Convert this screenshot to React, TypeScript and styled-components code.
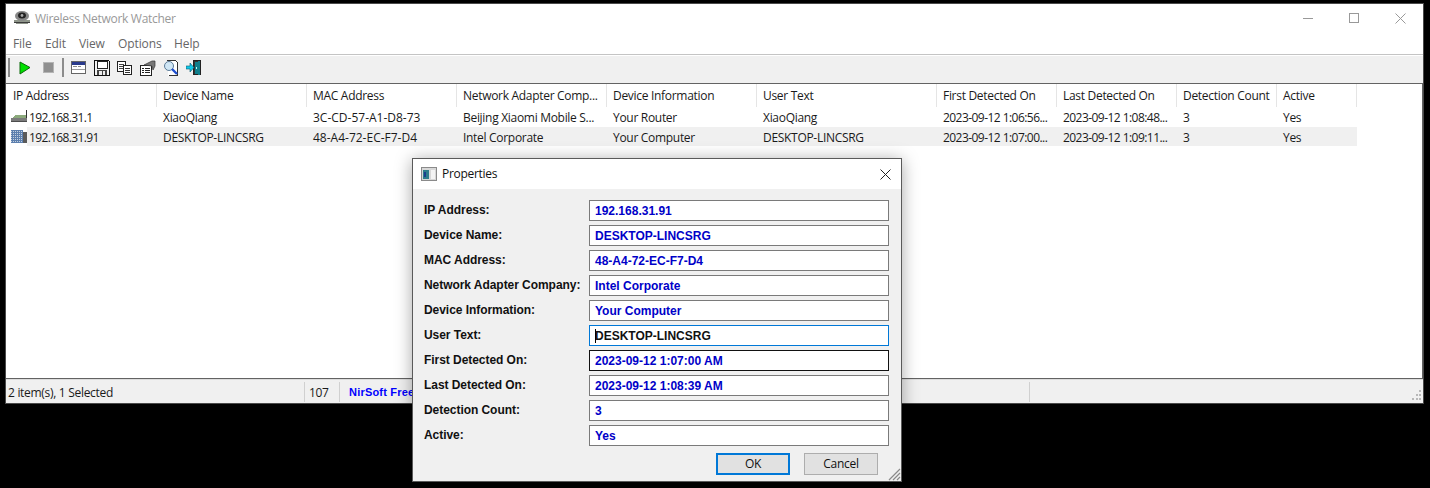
import React from "react";
import styled, { createGlobalStyle } from "styled-components";

const Global = createGlobalStyle`
  html, body { margin: 0; padding: 0; background: #000; }
  body { width: 1430px; height: 488px; overflow: hidden; font-family: "Open Sans", "Noto Sans", sans-serif; letter-spacing: -0.3px; }
  * { box-sizing: border-box; }
`;

const Desktop = styled.div`
  position: relative;
  width: 1430px;
  height: 488px;
  background: #000;
  padding: 3px 6px 0 5px;
`;
const Win = styled.div`
  width: 1419px;
  height: 401px;
  border: 1px solid #4a4a4a;
  background: #fff;
  display: flex;
  flex-direction: column;
`;
const TitleBar = styled.div`
  height: 27px;
  display: flex;
  align-items: center;
  padding-left: 7px;
  gap: 4px;
  color: #999;
  font-size: 12px;
  flex: none;
`;
const TitleText = styled.span`flex: 1; padding-top: 1px;`;
const WinButtons = styled.div`display: flex; height: 27px;`;
const WinButton = styled.div`
  width: 46px;
  display: flex;
  align-items: center;
  justify-content: center;
  margin-top: 1px;
`;
const MenuBar = styled.div`
  display: flex;
  align-items: center;
  padding: 2px 0 0 7px;
  border-bottom: 1px solid #c4c4c4;
  height: 24px;
  flex: none;
`;
const MenuItem = styled.span<{ $w: number }>`
  width: ${(p) => p.$w}px;
  font-size: 12px;
  color: #666;
  letter-spacing: -0.1px;
`;
const Toolbar = styled.div`
  height: 29px;
  flex: none;
  background: #f0f0f0;
  border-top: 1px solid #fff;
  border-bottom: 1px solid #636363;
  display: flex;
  align-items: center;
  padding: 0 0 4px 2px;
`;
const ToolSep = styled.div<{ $gap: number }>`
  width: 2px;
  height: 19px;
  background: #8c8c8c;
  margin-right: ${(p) => p.$gap}px;
  flex: none;
`;
const ToolBtn = styled.div<{ $w?: number }>`
  width: ${(p) => p.$w ?? 23}px;
  height: 20px;
  display: flex;
  align-items: center;
  justify-content: center;
  flex: none;
`;
const List = styled.div`
  flex: 1;
  min-height: 0;
  background: #fff;
  border-bottom: 1px solid #636363;
  padding-left: 1px;
  border-right: 1px solid #636363;
`;
const Grid = styled.div`
  display: grid;
  grid-template-columns: 150px 150px 150px 150px 150px 180px 120px 120px 100px 80px;
  width: 1350px;
`;
const HeadCell = styled.div`
  height: 23px;
  padding: 0 0 0 6px;
  display: flex;
  align-items: center;
  font-size: 12px;
  color: #1a1a1a;
  border-right: 1px solid #e5e5e5;
  white-space: nowrap;
  overflow: hidden;
`;
const Cell = styled.div<{ $sel?: boolean; $track: number }>`
  height: ${(p) => (p.$sel ? 19 : 20)}px;
  padding-left: 6px;
  padding-top: ${(p) => (p.$sel ? 1 : 0)}px;
  display: flex;
  align-items: center;
  font-size: 12px;
  letter-spacing: ${(p) => p.$track}px;
  color: #1a1a1a;
  white-space: nowrap;
  overflow: hidden;
  background: ${(p) => (p.$sel ? "#f0f0f0" : "transparent")};
`;
const FirstCell = styled(Cell)`
  background: ${(p) => (p.$sel ? "linear-gradient(to right, #fff 20px, #f0f0f0 20px)" : "transparent")};
  padding-left: 4px;
`;
const StatusBar = styled.div`
  height: 24px;
  flex: none;
  background: #f0f0f0;
  border-top: 1px solid #dcdcdc;
  display: flex;
  align-items: center;
  position: relative;
  font-size: 12px;
  color: #1a1a1a;
`;
const StatusPart = styled.div<{ $w?: number; $pad?: number; $link?: boolean }>`
  ${(p) => (p.$w ? `width: ${p.$w}px; flex: none;` : "flex: 1;")}
  height: 20px;
  display: flex;
  align-items: center;
  padding-left: ${(p) => p.$pad ?? 2}px;
  padding-top: 2px;
  white-space: nowrap;
  overflow: hidden;
  border-right: 1px solid #d0d0d0;
  &:last-of-type { border-right: 0; }
  ${(p) => (p.$link ? `color: #0000ff; font-family: "Liberation Sans", Arial, sans-serif; font-weight: 700; font-size: 11px; letter-spacing: .2px; padding-top: 0;` : "")}
`;
const Grip = styled.svg`
  position: absolute;
  right: 1px;
  bottom: 2px;
`;

const Dialog = styled.div`
  position: absolute;
  left: 412px;
  top: 158px;
  width: 490px;
  height: 324px;
  border: 1px solid #5a5a5a;
  background: #f0f0f0;
  box-shadow: 0 2px 16px rgba(0, 0, 0, 0.35);
  display: flex;
  flex-direction: column;
`;
const DlgTitle = styled.div`
  height: 30px;
  flex: none;
  background: #fff;
  display: flex;
  align-items: center;
  padding-left: 8px;
  gap: 5px;
  font-size: 12px;
  color: #111;
`;
const DlgTitleText = styled.span`flex: 1; padding-bottom: 1px;`;
const DlgClose = styled.div`
  width: 32px;
  display: flex;
  justify-content: center;
`;
const Form = styled.div`
  padding: 11px 12px 0 11px;
  display: flex;
  flex-direction: column;
  gap: 4px;
`;
const Row = styled.div`
  display: flex;
  align-items: flex-start;
  height: 21px;
`;
const Label = styled.label`
  width: 165px;
  flex: none;
  font-family: "Liberation Sans", Arial, sans-serif;
  font-weight: 700;
  font-size: 12px;
  letter-spacing: -0.05px;
  color: #111;
  line-height: 14px;
  padding-top: 3px;
  white-space: nowrap;
`;
const Field = styled.div<{ $variant?: "focus" | "dark" }>`
  width: 300px;
  height: 21px;
  flex: none;
  background: #fff;
  border: 1px solid ${(p) => (p.$variant === "focus" ? "#0078d7" : p.$variant === "dark" ? "#111" : "#7a7a7a")};
  padding: 2px 0 0 5px;
  font-family: "Liberation Sans", Arial, sans-serif;
  font-weight: 700;
  font-size: 12px;
  letter-spacing: 0;
  line-height: 17px;
  color: ${(p) => (p.$variant === "focus" ? "#111" : "#0000c8")};
  position: relative;
  white-space: nowrap;
`;
const Caret = styled.span`
  position: absolute;
  left: 5px;
  top: 3px;
  width: 1px;
  height: 14px;
  background: #000;
`;
const Buttons = styled.div`
  display: flex;
  gap: 14px;
  padding: 7px 0 0 303px;
`;
const Btn = styled.div<{ $primary?: boolean }>`
  width: 74px;
  height: 22px;
  background: #e1e1e1;
  border: ${(p) => (p.$primary ? "2px solid #0078d7" : "1px solid #adadad")};
  display: flex;
  align-items: center;
  justify-content: center;
  font-size: 12px;
  padding-bottom: 1px;
  color: #111;
`;
const DlgGrip = styled.svg`
  position: absolute;
  right: 0;
  bottom: 0;
`;

const Icon16 = styled.svg<{ $w?: number }>`
  width: ${(p) => p.$w ?? 16}px;
  height: 16px;
  flex: none;
  shape-rendering: crispEdges;
  display: block;
`;

const AppIcon = () => (
  <Icon16 viewBox="0 0 18 16" $w={18}>
    <path d="M1 10h16v2l-3 2H4l-3-2z" fill="#8f968a" />
    <path d="M1 12h16v1H1z" fill="#3d3d3d" />
    <ellipse cx="9" cy="6" rx="7" ry="5" fill="#888" shapeRendering="auto" />
    <ellipse cx="9" cy="5.5" rx="4" ry="3" fill="#222" shapeRendering="auto" />
    <circle cx="9" cy="5.5" r="1.4" fill="#aaa" shapeRendering="auto" />
  </Icon16>
);
const Play = () => (
  <Icon16 viewBox="0 0 16 16">
    <path d="M3 2l10 5.5L3 14z" fill="#00e000" stroke="#0a6a0a" strokeWidth="1" shapeRendering="auto" />
  </Icon16>
);
const Stop = () => (
  <Icon16 viewBox="0 0 16 16">
    <rect x="2.5" y="2.5" width="10" height="10" fill="#8f8f8f" stroke="#b4b4b4" />
  </Icon16>
);
const WindowIcon = () => (
  <Icon16 viewBox="0 0 16 16">
    <rect x="0.5" y="1.5" width="14" height="12" fill="#fff" stroke="#666" />
    <rect x="1" y="2" width="13" height="3" fill="#2a3a8c" />
    <rect x="2" y="6" width="4" height="1" fill="#8a8a8a" />
    <rect x="7" y="6" width="3" height="1" fill="#8a8a8a" />
    <rect x="1" y="9" width="13" height="1" fill="#9a9a9a" />
  </Icon16>
);
const Floppy = () => (
  <Icon16 viewBox="0 0 16 16">
    <path d="M0.5 0.5h14l1 1v14H0.5z" fill="#f4f4f4" stroke="#111" />
    <rect x="3" y="1" width="10" height="7" fill="#fff" stroke="#222" />
    <rect x="3" y="10" width="10" height="5" fill="#444" />
    <rect x="5" y="11" width="3" height="4" fill="#eee" />
    <rect x="9" y="11" width="2" height="4" fill="#eee" />
  </Icon16>
);
const CopyIcon = () => (
  <Icon16 viewBox="0 0 16 16">
    <rect x="0.5" y="1.5" width="8" height="10" fill="#fff" stroke="#222" />
    <path d="M2 4h5M2 6h5M2 8h5" stroke="#444" />
    <rect x="6.5" y="5.5" width="8" height="9" fill="#fff" stroke="#222" />
    <path d="M8 8h5M8 10h5M8 12h5" stroke="#333" />
  </Icon16>
);
const PropsIcon = () => (
  <Icon16 viewBox="0 0 16 16">
    <rect x="0.5" y="5.5" width="11" height="10" fill="#fff" stroke="#222" />
    <path d="M2 8h2M5 8h5M2 10h2M5 10h5M2 12h2M5 12h5" stroke="#222" />
    <path d="M4 5L12 1h3v5l-2 4-1-4z" fill="#777" stroke="#333" strokeWidth=".7" shapeRendering="auto" />
  </Icon16>
);
const SearchIcon = () => (
  <Icon16 viewBox="0 0 16 16">
    <path d="M3.5 0.5h9l2 2v13h-9" fill="#fff" stroke="#333" />
    <circle cx="6" cy="6" r="4.5" fill="#cfe6f5" stroke="#5b7b98" shapeRendering="auto" />
    <path d="M9 9l5 5" stroke="#1f4fd0" strokeWidth="2.4" shapeRendering="auto" />
  </Icon16>
);
const ExitIcon = () => (
  <Icon16 viewBox="0 0 16 16">
    <path d="M7.5 0.5h7v14h-7z" fill="#333" stroke="#222" />
    <path d="M9 2l5-1v14l-5-1z" fill="#0f7f8c" />
    <rect x="10" y="7" width="1" height="2" fill="#bff" />
    <path d="M0 6h4V3l4 4.5L4 12V9H0z" fill="#10c8e8" stroke="#0a5a70" strokeWidth=".6" shapeRendering="auto" />
  </Icon16>
);
const RouterIcon = () => (
  <Icon16 viewBox="0 0 18 16" $w={18}>
    <path d="M2 9l2-3h12v3z" fill="#8caa7c" />
    <rect x="0" y="9" width="16" height="3" fill="#7b7b7b" />
    <rect x="0" y="12" width="16" height="1" fill="#4d4d4d" />
    <rect x="15" y="1" width="1" height="8" fill="#333" />
  </Icon16>
);
const ComputerIcon = () => (
  <Icon16 viewBox="0 0 18 16" $w={18}>
    <defs>
      <pattern id="grid" width="2" height="2" patternUnits="userSpaceOnUse">
        <rect width="2" height="2" fill="#5c7fae" />
        <rect width="1" height="1" fill="#c3d0e0" />
      </pattern>
    </defs>
    <rect x="0" y="1" width="12" height="13" fill="url(#grid)" />
    <rect x="12" y="3" width="4" height="11" fill="#5a5a5a" />
  </Icon16>
);

const columns = ["IP Address", "Device Name", "MAC Address", "Network Adapter Comp...", "Device Information", "User Text", "First Detected On", "Last Detected On", "Detection Count", "Active"];
const tracking = [-0.65, -0.3, 0, -0.3, -0.3, -0.3, -0.55, -0.55, -0.3, -0.3];
const rows = [
  { icon: <RouterIcon />, sel: false, cells: ["192.168.31.1", "XiaoQiang", "3C-CD-57-A1-D8-73", "Beijing Xiaomi Mobile S...", "Your Router", "XiaoQiang", "2023-09-12 1:06:56...", "2023-09-12 1:08:48...", "3", "Yes"] },
  { icon: <ComputerIcon />, sel: true, cells: ["192.168.31.91", "DESKTOP-LINCSRG", "48-A4-72-EC-F7-D4", "Intel Corporate", "Your Computer", "DESKTOP-LINCSRG", "2023-09-12 1:07:00...", "2023-09-12 1:09:11...", "3", "Yes"] },
];
const props: [string, string, ("focus" | "dark")?][] = [
  ["IP Address:", "192.168.31.91"],
  ["Device Name:", "DESKTOP-LINCSRG"],
  ["MAC Address:", "48-A4-72-EC-F7-D4"],
  ["Network Adapter Company:", "Intel Corporate"],
  ["Device Information:", "Your Computer"],
  ["User Text:", "DESKTOP-LINCSRG", "focus"],
  ["First Detected On:", "2023-09-12 1:07:00 AM", "dark"],
  ["Last Detected On:", "2023-09-12 1:08:39 AM"],
  ["Detection Count:", "3"],
  ["Active:", "Yes"],
];
const menus: [string, number][] = [["File", 32], ["Edit", 34], ["View", 39], ["Options", 56], ["Help", 40]];

export default function App() {
  return (
    <Desktop>
      <Global />
      <Win>
        <TitleBar>
          <AppIcon />
          <TitleText>Wireless Network Watcher</TitleText>
          <WinButtons>
            <WinButton>
              <svg width="10" height="10" viewBox="0 0 10 10"><path d="M0 5.5h10" stroke="#999" /></svg>
            </WinButton>
            <WinButton>
              <svg width="10" height="10" viewBox="0 0 10 10"><rect x=".5" y=".5" width="9" height="9" fill="none" stroke="#999" /></svg>
            </WinButton>
            <WinButton>
              <svg width="11" height="11" viewBox="0 0 11 11"><path d="M.5.5l10 10M10.5.5l-10 10" stroke="#999" /></svg>
            </WinButton>
          </WinButtons>
        </TitleBar>
        <MenuBar>
          {menus.map(([m, w]) => (
            <MenuItem key={m} $w={w}>{m}</MenuItem>
          ))}
        </MenuBar>
        <Toolbar>
          <ToolSep $gap={4} />
          <ToolBtn $w={22}><Play /></ToolBtn>
          <ToolBtn $w={26}><Stop /></ToolBtn>
          <ToolSep $gap={3} />
          <ToolBtn><WindowIcon /></ToolBtn>
          <ToolBtn><Floppy /></ToolBtn>
          <ToolBtn><CopyIcon /></ToolBtn>
          <ToolBtn><PropsIcon /></ToolBtn>
          <ToolBtn><SearchIcon /></ToolBtn>
          <ToolBtn><ExitIcon /></ToolBtn>
        </Toolbar>
        <List>
          <Grid>
            {columns.map((c) => (
              <HeadCell key={c}>{c}</HeadCell>
            ))}
            {rows.map((r) =>
              r.cells.map((c, i) =>
                i === 0 ? (
                  <FirstCell key={i} $sel={r.sel} $track={tracking[i]}>{r.icon}{c}</FirstCell>
                ) : (
                  <Cell key={i} $sel={r.sel} $track={tracking[i]}>{c}</Cell>
                )
              )
            )}
          </Grid>
        </List>
        <StatusBar>
          <StatusPart $w={299}>2 item(s), 1 Selected</StatusPart>
          <StatusPart $w={35} $pad={4}>107</StatusPart>
          <StatusPart $w={690} $pad={9} $link>NirSoft Free</StatusPart>
          <StatusPart />
          <Grip width="11" height="11" viewBox="0 0 11 11">
            <path d="M8 0h2v2H8zM5 4h2v2H5zM8 4h2v2H8zM1 8h2v2H1zM5 8h2v2H5zM8 8h2v2H8z" fill="#b8b8b8" />
          </Grip>
        </StatusBar>
      </Win>
      <Dialog>
        <DlgTitle>
          <svg width="16" height="16" viewBox="0 0 16 16" shapeRendering="crispEdges">
            <rect x=".5" y="1.5" width="15" height="13" fill="#d8d8d8" stroke="#8a8a8a" />
            <rect x="2" y="4" width="6" height="9" fill="#2e7d8c" />
            <rect x="3" y="6" width="2" height="5" fill="#1c3f8e" />
            <rect x="10" y="4" width="4" height="9" fill="#f4f4f4" />
          </svg>
          <DlgTitleText>Properties</DlgTitleText>
          <DlgClose>
            <svg width="11" height="11" viewBox="0 0 11 11"><path d="M.5.5l10 10M10.5.5l-10 10" stroke="#222" /></svg>
          </DlgClose>
        </DlgTitle>
        <Form>
          {props.map(([l, v, variant]) => (
            <Row key={l}>
              <Label>{l}</Label>
              <Field $variant={variant}>
                {variant === "focus" && <Caret />}
                {v}
              </Field>
            </Row>
          ))}
        </Form>
        <Buttons>
          <Btn $primary>OK</Btn>
          <Btn>Cancel</Btn>
        </Buttons>
        <DlgGrip width="13" height="13" viewBox="0 0 13 13">
          <path d="M12 1L1 12M12 5l-7 7M12 9l-3 3" stroke="#8a8a8a" strokeWidth="1.2" />
        </DlgGrip>
      </Dialog>
    </Desktop>
  );
}
